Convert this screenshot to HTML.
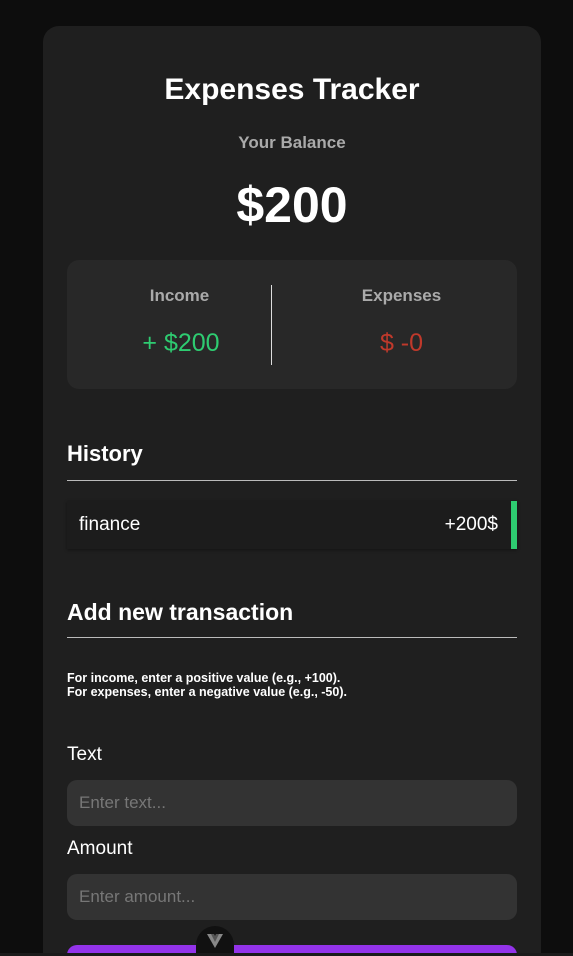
<!DOCTYPE html>
<html style="height:956px;overflow:hidden"><head><style>
*{box-sizing:border-box;margin:0;padding:0}
body{width:573px;height:956px;background:#0d0d0d;font-family:"Liberation Sans",sans-serif;overflow:hidden;position:relative}
.card{position:absolute;left:43px;top:26px;width:498px;height:930px;background:#1f1f1f;border-radius:16px 16px 0 0;overflow:hidden}
.abs{position:absolute}
h1{position:absolute;left:0;width:100%;top:47px;text-align:center;color:#fff;font-size:30px;font-weight:bold}
.bal{top:107px;width:100%;text-align:center;color:#aaa;font-weight:bold;font-size:17px}
.amt{top:150px;width:100%;text-align:center;color:#fff;font-weight:bold;font-size:50px}
.box{left:24px;top:234px;width:450px;height:129px;background:#282828;border-radius:12px}
.lbl{color:#aaa;font-weight:bold;font-size:17px;text-align:center;width:225px}
.sec{left:24px;color:#fff;font-weight:bold;font-size:22px}
.hr{left:24px;width:450px;height:1px;background:#bbb}
.inp{left:24px;width:450px;height:46px;background:#333;border-radius:10px;color:#777;font-size:17px;padding:13px 12px}
</style></head><body>
<div class="card">
<h1>Expenses Tracker</h1>
<div class="abs bal">Your Balance</div>
<div class="abs amt">$200</div>
<div class="abs box">
 <div class="abs lbl" style="left:0;top:26px">Income</div>
 <div class="abs lbl" style="left:222px;top:26px">Expenses</div>
 <div class="abs" style="left:204px;top:25px;width:1px;height:80px;background:#ddd"></div>
 <div class="abs" style="left:0;width:228px;top:69px;text-align:center;color:#2ecc71;font-size:25px">+ $200</div>
 <div class="abs" style="left:222px;width:225px;top:69px;text-align:center;color:#c0392b;font-size:25px">$ -0</div>
</div>
<div class="abs sec" style="top:415px">History</div>
<div class="abs hr" style="top:454px"></div>
<div class="abs" style="left:24px;top:475px;width:450px;height:48px;background:#1c1c1c;box-shadow:0 1px 3px rgba(0,0,0,.4)">
 <div class="abs" style="left:12px;top:13px;color:#fff;font-size:19px">finance</div>
 <div class="abs" style="right:19px;top:13px;color:#fff;font-size:19px">+200$</div>
 <div class="abs" style="right:0;top:0;width:6px;height:48px;background:#2ecc71"></div>
</div>
<div class="abs sec" style="top:573px;font-size:23px">Add new transaction</div>
<div class="abs hr" style="top:611px"></div>
<div class="abs" style="left:24px;top:645px;color:#fff;font-weight:bold;font-size:12.5px;line-height:14px;white-space:nowrap">For income, enter a positive value (e.g., +100).<br>For expenses, enter a negative value (e.g., -50).</div>
<div class="abs" style="left:24px;top:718px;color:#fff;font-size:19px">Text</div>
<div class="abs inp" style="top:754px">Enter text...</div>
<div class="abs" style="left:24px;top:812px;color:#fff;font-size:19px">Amount</div>
<div class="abs inp" style="top:848px">Enter amount...</div>
<div class="abs" style="left:24px;top:919px;width:450px;height:40px;background:#9333ea;border-radius:10px"></div>
</div>
<div class="abs" style="left:196px;top:926px;width:38px;height:30px;background:#111;border-radius:19px 19px 0 0">
<svg width="38" height="30" viewBox="0 0 38 30"><path d="M11 8h6l2 4 2-4h6l-8 14z" fill="#888"/><path d="M15 8h3l1 2 1-2h3l-4 8z" fill="#555"/></svg></div>
<div class="abs" style="left:0;top:953px;width:573px;height:3px;background:#1a1a1a"></div>
</body></html>
